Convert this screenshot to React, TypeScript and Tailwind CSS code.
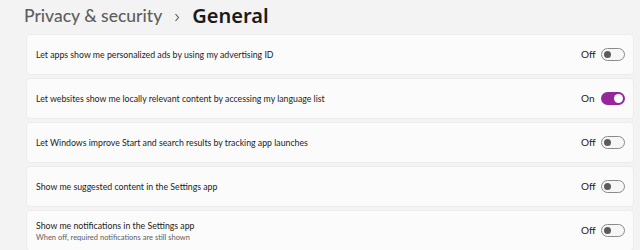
const rows = [
  { label: "Let apps show me personalized ads by using my advertising ID", on: false },
  { label: "Let websites show me locally relevant content by accessing my language list", on: true },
  { label: "Let Windows improve Start and search results by tracking app launches", on: false },
  { label: "Show me suggested content in the Settings app", on: false },
  {
    label: "Show me notifications in the Settings app",
    sub: "When off, required notifications are still shown",
    on: false,
  },
];

const Toggle = ({ on }: { on: boolean }) => {
  return (
    <div className="flex items-center gap-[8px]">
      <span className="text-[10px] text-[#1b1b1b] w-[12px]">{on ? "On" : "Off"}</span>
      {on ? (
        <div className="w-[24px] h-[13px] rounded-full bg-[#95279a] flex items-center justify-end pr-[2px]">
          <div className="w-[9px] h-[9px] rounded-full bg-white" />
        </div>
      ) : (
        <div className="w-[24px] h-[13px] rounded-full border border-[#8a8a8a] bg-[#f6f6f6] flex items-center pl-[2px]">
          <div className="w-[7px] h-[7px] rounded-full bg-[#5c5c5c]" />
        </div>
      )}
    </div>
  );
};

export default function App() {
  return (
    <div
      className="w-[640px] h-[250px] overflow-hidden bg-[#f3f3f3] pl-[26px] pr-[6px]"
      style={{ fontFamily: 'Lato, "Noto Sans", sans-serif' }}
    >
      <div className="h-[34px] flex items-center gap-[12px] -ml-[2px] pb-[2px]">
        <span className="text-[17.5px] text-[#5e5e5e] font-medium">Privacy &amp; security</span>
        <svg width="6" height="9" viewBox="0 0 6 9" className="mt-[2px]">
          <path d="M1.5 1 L4.5 4.5 L1.5 8" fill="none" stroke="#555" strokeWidth="1.1" />
        </svg>
        <span className="text-[20px] text-[#1a1a1a] font-semibold font-['Noto_Sans']">General</span>
      </div>
      <div className="flex flex-col gap-[3px]">
        {rows.map((r) => (
          <div
            key={r.label}
            className="h-[41px] bg-[#fbfbfb] border border-[#ececec] rounded-[4px] flex items-center justify-between pl-[9px] pr-[8px]"
          >
            <div className="flex flex-col">
              <span className="text-[8.75px] text-[#1b1b1b] leading-[13px]">{r.label}</span>
              {r.sub && (
                <span className="text-[7.5px] text-[#616161] leading-[11px]">{r.sub}</span>
              )}
            </div>
            <Toggle on={r.on} />
          </div>
        ))}
      </div>
    </div>
  );
}
